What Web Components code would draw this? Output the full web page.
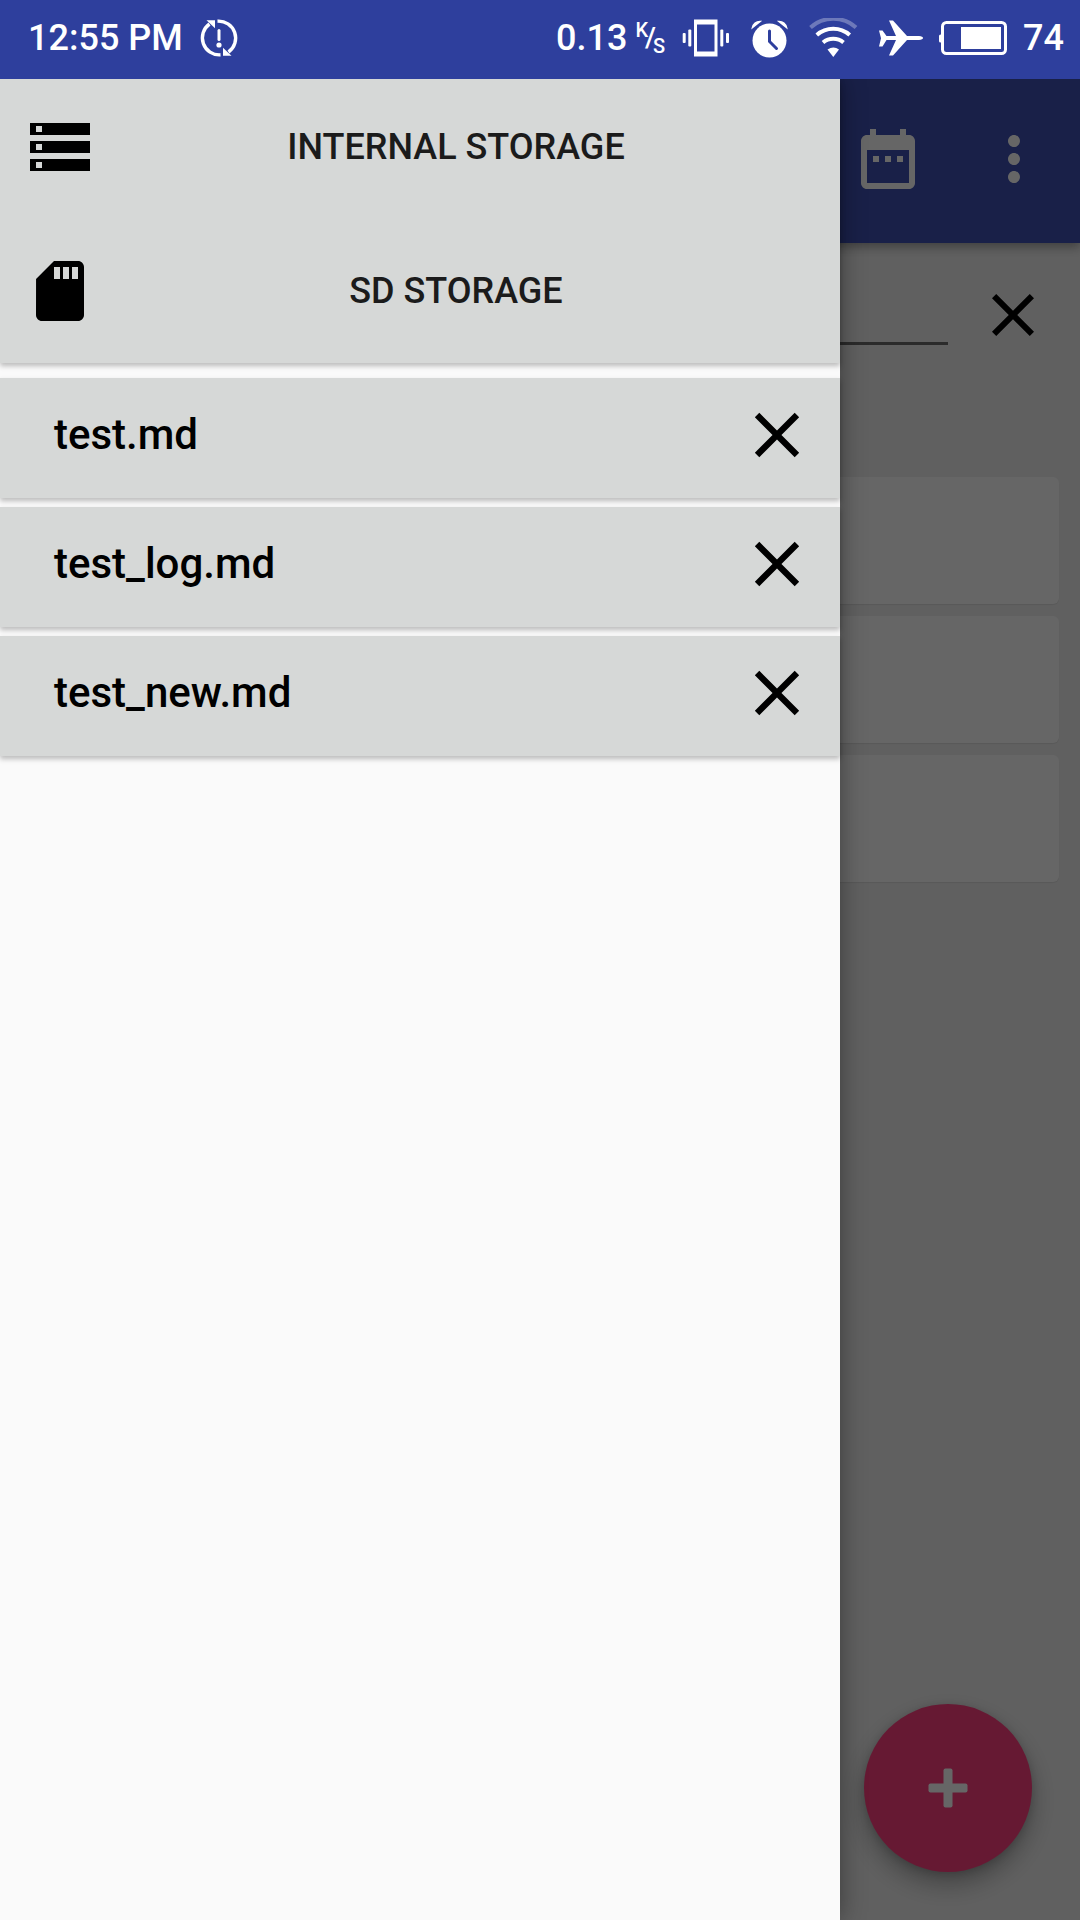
<!DOCTYPE html>
<html lang="en">
<head>
<meta charset="utf-8">
<meta name="viewport" content="width=device-width, initial-scale=1">
<title>Notes</title>
<style>
  html, body { margin: 0; height: 100%; }
  body {
    font-family: Roboto, "Liberation Sans", sans-serif;
    --primary: #3f51b5;
    --primary-dark: #2e3f9d;
    --accent: #ff4081;
    --surface: #d6d8d7;
  }
</style>
</head>
<body>
<notes-app>
  <status-bar slot="status" time="12:55 PM" speed="0.13" battery="74"></status-bar>
  <notes-screen slot="screen"></notes-screen>
  <nav-drawer slot="drawer">
    <storage-item slot="storage" icon="storage">INTERNAL STORAGE</storage-item>
    <storage-item slot="storage" icon="sd">SD STORAGE</storage-item>
    <file-item>test.md</file-item>
    <file-item>test_log.md</file-item>
    <file-item>test_new.md</file-item>
  </nav-drawer>
</notes-app>

<script>
const ICONS = {
  storage: 'M2 20h20v-4H2v4zm2-3h2v2H4v-2zM2 4v4h20V4H2zm4 3H4V5h2v2zm-4 7h20v-4H2v4zm2-3h2v2H4v-2z',
  sd: 'M18 2h-8L4.02 8 4 20c0 1.1.9 2 2 2h12c1.1 0 2-.9 2-2V4c0-1.1-.9-2-2-2zm-6 6h-2V4h2v4zm3 0h-2V4h2v4zm3 0h-2V4h2v4z',
  clear: 'M19 6.41L17.59 5 12 10.59 6.41 5 5 6.41 10.59 12 5 17.59 6.41 19 12 13.41 17.59 19 19 17.59 13.41 12z',
  calendar: 'M9 11H7v2h2v-2zm4 0h-2v2h2v-2zm4 0h-2v2h2v-2zm2-7h-1V2h-2v2H8V2H6v2H5c-1.1 0-2 .9-2 2v14c0 1.1.9 2 2 2h14c1.1 0 2-.9 2-2V6c0-1.1-.9-2-2-2zm0 16H5V9h14v11z',
  more: 'M12 8c1.1 0 2-.9 2-2s-.9-2-2-2-2 .9-2 2 .9 2 2 2zm0 2c-1.1 0-2 .9-2 2s.9 2 2 2 2-.9 2-2-.9-2-2-2zm0 6c-1.1 0-2 .9-2 2s.9 2 2 2 2-.9 2-2-.9-2-2-2z'
};

function define(name, html, setup) {
  const template = document.createElement('template');
  template.innerHTML = html;
  customElements.define(name, class extends HTMLElement {
    constructor() {
      super();
      this.attachShadow({ mode: 'open' }).append(template.content.cloneNode(true));
    }
    connectedCallback() { if (setup) setup(this, this.shadowRoot); }
  });
}

const RESET = `
  :host, * { box-sizing: border-box; }
  button { border: 0; padding: 0; margin: 0; background: none; color: inherit; font: inherit; cursor: pointer; }
`;

/* Material glyph on a 24-unit grid */
define('md-icon', `
  <style>
    :host { display: block; flex: none; width: 72px; height: 72px; }
    svg { display: block; width: 100%; height: 100%; fill: currentColor; }
  </style>
  <svg viewBox="0 0 24 24" aria-hidden="true"><path/></svg>`,
  (el, root) => root.querySelector('path').setAttribute('d', ICONS[el.getAttribute('name')]));

define('notes-app', `
  <style>
    ${RESET}
    :host { display: flex; flex-direction: column; min-height: 100vh; }
    .stage { position: relative; flex: 1; display: flex; overflow: hidden; }
    .scrim { position: absolute; inset: 0; background: rgba(0, 0, 0, .6); }
    slot[name=screen]::slotted(*) { flex: 1; }
  </style>
  <slot name="status"></slot>
  <div class="stage">
    <slot name="screen"></slot>
    <div class="scrim"></div>
    <slot name="drawer"></slot>
  </div>`);

define('status-bar', `
  <style>
    ${RESET}
    :host {
      display: flex; align-items: center; justify-content: space-between;
      height: 79px; padding: 0 16px 4px 28px;
      background: var(--primary-dark); color: #fff;
      font-size: 36px; font-weight: 500; line-height: 44px;
    }
    .group { display: flex; align-items: center; gap: 16px; }
    svg { display: block; flex: none; fill: currentColor; }
    .rate { display: flex; align-items: center; gap: 8px; }
    .unit { display: flex; height: 36px; font-size: 20px; line-height: 20px; }
    .unit span:nth-child(2) { align-self: center; font-size: 28px; margin: 0 -3px; }
    .unit span:nth-child(3) { align-self: flex-end; }
  </style>
  <div class="group">
    <span class="time"></span>
    <svg width="40" height="40" viewBox="0 0 40 40">
      <g fill="none" stroke="currentColor" stroke-width="3.400">
        <path d="M18.500 3.200A17 17 0 0 1 29.500 34"/>
        <path d="M21.500 36.800A17 17 0 0 1 10.500 6"/>
      </g>
      <path d="M7.500 2.300h8.500v8z"/><path d="M32.500 37.700h-8.500v-8z"/>
      <rect x="18.500" y="11" width="3" height="12" rx="1.500"/><circle cx="20" cy="27" r="2.600"/>
    </svg>
  </div>
  <div class="group">
    <div class="rate"><span class="speed"></span><span class="unit"><span>K</span><span>/</span><span>S</span></span></div>
    <svg width="50" height="40" viewBox="0 0 50 40">
      <path fill-rule="evenodd" d="M13 1.500h23.500v37H13zM16 6.500v27h17.500v-27z"/>
      <rect x="1.700" y="15" width="3" height="10" rx="1"/><rect x="7.300" y="11.500" width="3" height="17" rx="1"/>
      <rect x="39.300" y="11.500" width="3" height="17" rx="1"/><rect x="45" y="15" width="3" height="10" rx="1"/>
    </svg>
    <svg width="42" height="40" viewBox="0 0 42 40">
      <circle cx="22.500" cy="22.500" r="17"/>
      <path d="M5.500 9.500A8 8 0 0 1 13 3.500zM39.500 9.500A8 8 0 0 0 32 3.500z" stroke="currentColor" stroke-width="1.500"/>
      <path d="M22.500 13v10.500l7 7" fill="none" stroke="#2e3f9d" stroke-width="3" stroke-linecap="round"/>
    </svg>
    <svg width="58" height="40" viewBox="0 0 58 40">
      <g fill="none" stroke="currentColor" stroke-width="4">
        <path d="M5.500 9.500A34 34 0 0 1 51 9.500" opacity=".3"/>
        <path d="M11.800 17A25 25 0 0 1 44.700 17"/>
        <path d="M18 24.500A16 16 0 0 1 38.500 24.500"/>
      </g>
      <path d="M22.500 31.500q6-4 11.500 0l-5.700 7.500z"/>
    </svg>
    <svg width="44" height="40" viewBox="0 0 44 40">
      <path d="M0 12.500h3.500l4 5.500H17L10 2.500h4L28 18h12q4 .5 4 2t-4 2H28L14 37.500h-4L17 22H7.500l-4 6.500H0l2-8.300z"/>
    </svg>
    <svg width="68" height="40" viewBox="0 0 68 40">
      <rect x="3.500" y="4.500" width="63" height="31" rx="4" fill="none" stroke="currentColor" stroke-width="3"/>
      <rect x="0" y="16.500" width="3" height="8" rx="1.500"/><rect x="22" y="9" width="40" height="22"/>
    </svg>
    <span class="battery"></span>
  </div>`,
  (el, root) => {
    for (const k of ['time', 'speed', 'battery'])
      root.querySelector('.' + k).textContent = el.getAttribute(k);
  });

define('notes-screen', `
  <style>
    ${RESET}
    :host { display: flex; flex-direction: column; position: relative; background: #f0f0f0; }
    header {
      display: flex; justify-content: flex-end; align-items: center; gap: 54px;
      height: 164px; padding: 0 30px 4px;
      background: var(--primary); color: #fff; box-shadow: 0 4px 10px rgba(0, 0, 0, .35);
    }
    .search { display: flex; align-items: center; gap: 29px; padding: 36px 31px 0 21px; height: 108px; }
    .search input {
      flex: 1; min-width: 0; height: 60px; border: 0; border-bottom: 3px solid #6c6c6c;
      background: none; font: inherit; font-size: 42px; outline: none;
    }
    ul { list-style: none; margin: 0; padding: 126px 21px 0; display: flex; flex-direction: column; gap: 12px; }
    li { height: 127px; background: #fff; border-radius: 6px; box-shadow: 0 1px 1px rgba(0, 0, 0, .08); }
    .fab {
      position: absolute; right: 48px; bottom: 48px; width: 168px; height: 168px; border-radius: 50%;
      background: var(--accent); display: grid; place-items: center;
      box-shadow: 0 12px 24px rgba(0, 0, 0, .3), 0 2px 8px rgba(0, 0, 0, .15);
    }
  </style>
  <header>
    <button aria-label="Calendar"><md-icon name="calendar"></md-icon></button>
    <button aria-label="More"><md-icon name="more"></md-icon></button>
  </header>
  <div class="search">
    <input type="text" aria-label="Search">
    <button aria-label="Clear"><md-icon name="clear"></md-icon></button>
  </div>
  <ul><li></li><li></li><li></li></ul>
  <button class="fab" aria-label="Add">
    <svg width="40" height="40" viewBox="0 0 40 40" fill="#fff" aria-hidden="true">
      <rect x="15.500" y=".5" width="9" height="39" rx="2"/><rect x=".5" y="15.500" width="39" height="9" rx="2"/>
    </svg>
  </button>`);

define('nav-drawer', `
  <style>
    ${RESET}
    :host {
      position: absolute; top: 0; bottom: 0; left: 0; width: calc(100% - 240px); max-width: 840px;
      display: flex; flex-direction: column; gap: 15px;
      background: #fafafa; box-shadow: 0 0 24px rgba(0, 0, 0, .4);
    }
    .storages {
      display: grid; grid-template-rows: 136px 144px; row-gap: 4px;
      background: var(--surface); box-shadow: 0 3px 5px rgba(0, 0, 0, .25);
    }
    .files { display: flex; flex-direction: column; gap: 9px; }
  </style>
  <div class="storages"><slot name="storage"></slot></div>
  <div class="files"><slot></slot></div>`);

define('storage-item', `
  <style>
    ${RESET}
    :host { display: flex; }
    button {
      flex: 1; display: flex; align-items: center; padding: 0 24px; color: #000;
      font-size: 36px; font-weight: 500; line-height: 44px;
    }
    span { flex: 1; text-align: center; color: #1b1b1b; }
  </style>
  <button><span><slot></slot></span></button>`,
  (el, root) => {
    const icon = document.createElement('md-icon');
    icon.setAttribute('name', el.getAttribute('icon'));
    root.querySelector('button').prepend(icon);
  });

define('file-item', `
  <style>
    ${RESET}
    :host {
      display: flex; align-items: center; height: 120px; padding: 0 25px 6px 54px;
      background: var(--surface); color: #000; box-shadow: 0 3px 5px rgba(0, 0, 0, .25);
      font-size: 42px; font-weight: 500; line-height: 48px;
    }
    .name { flex: 1; text-align: left; }
    md-icon { width: 76px; height: 76px; }
  </style>
  <button class="name"><slot></slot></button>
  <button aria-label="Remove"><md-icon name="clear"></md-icon></button>`);
</script>
</body>
</html>
